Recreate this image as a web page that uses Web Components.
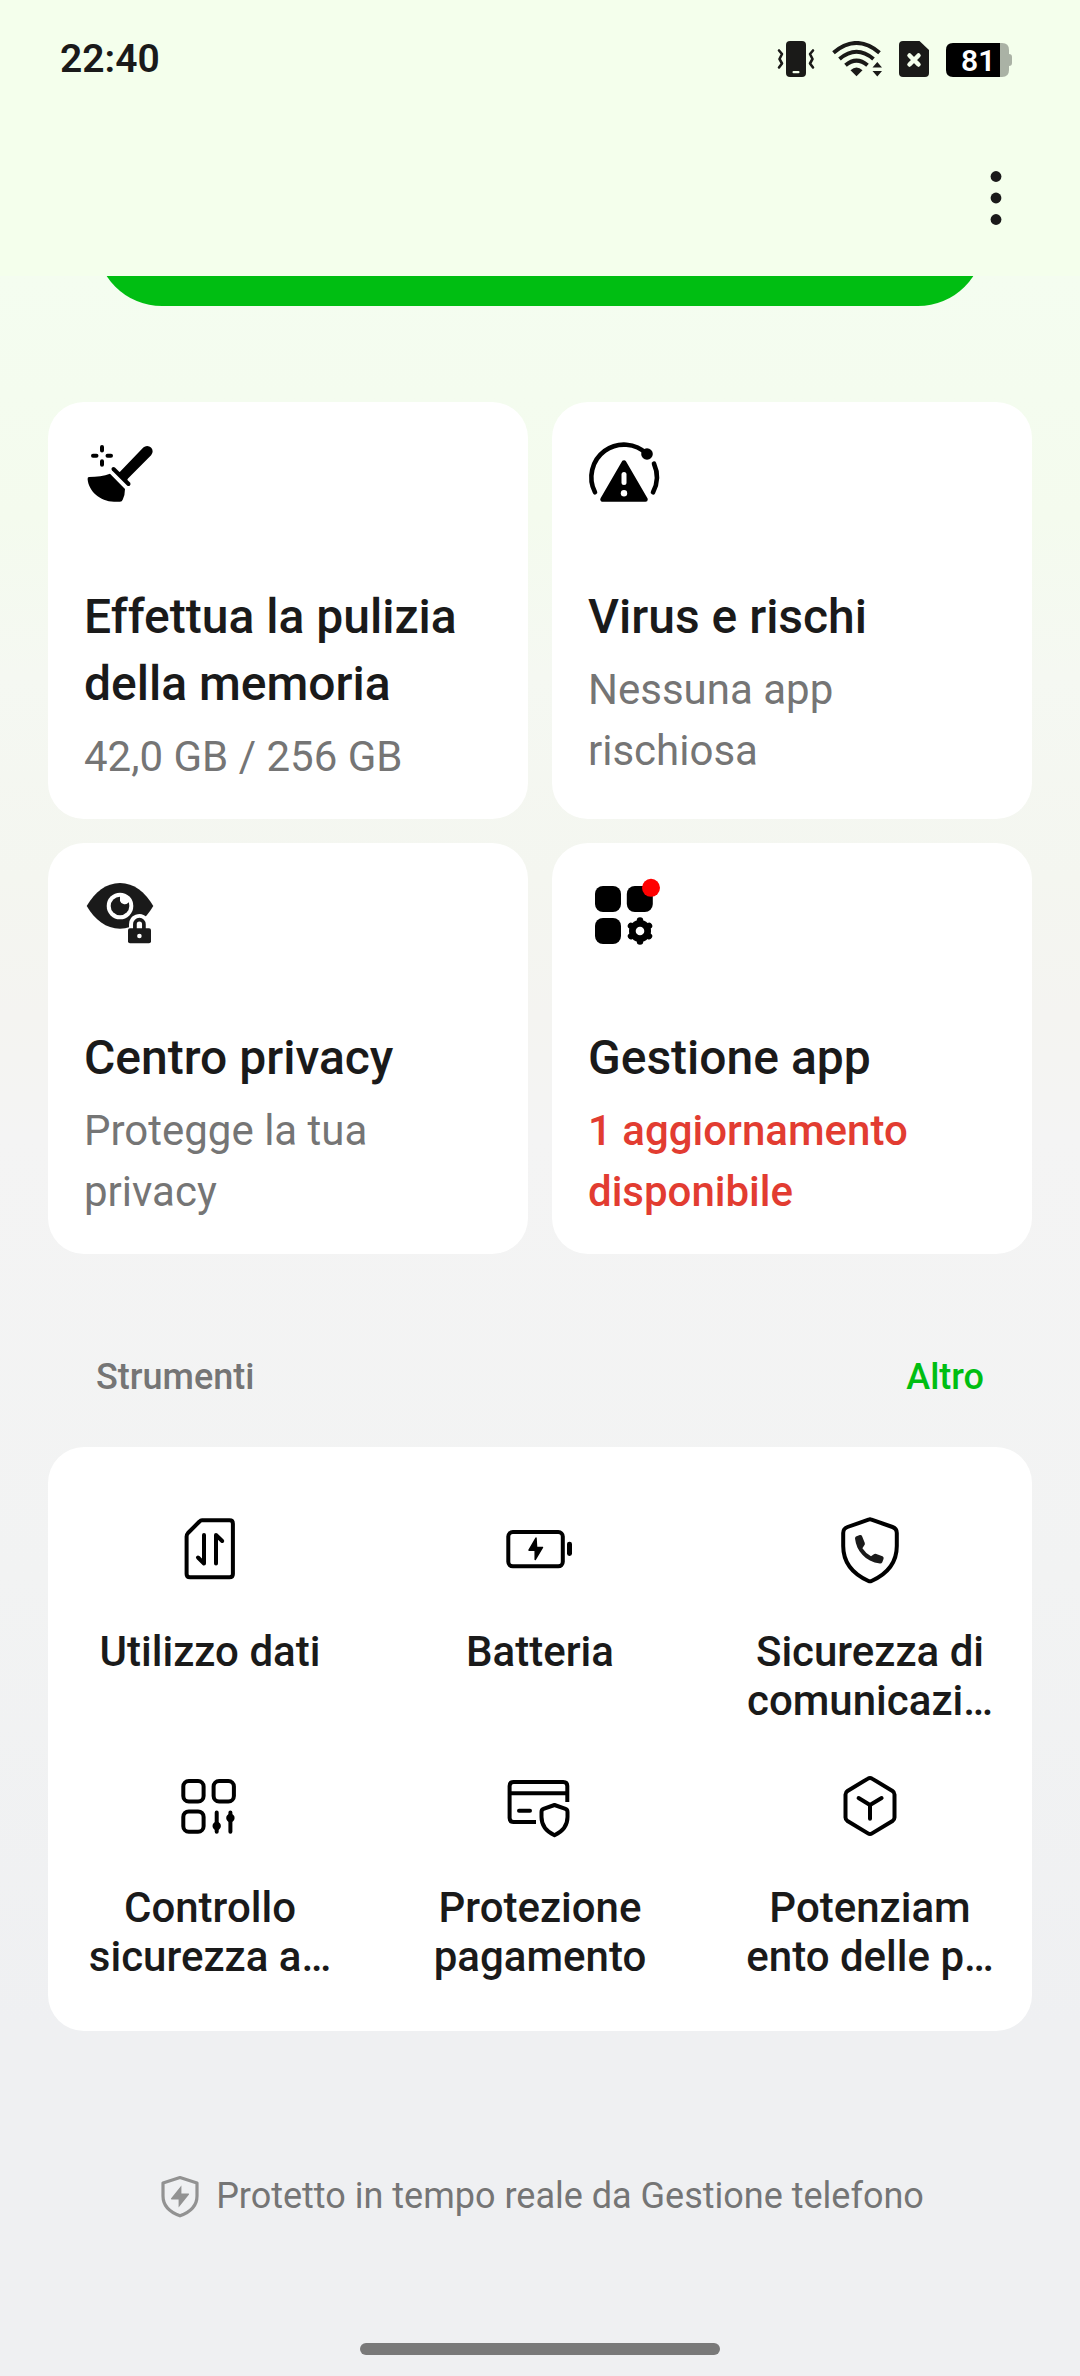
<!DOCTYPE html>
<html lang="it">
<head>
<meta charset="utf-8">
<meta name="viewport" content="width=device-width, initial-scale=1">
<title>Gestione telefono</title>
<style>
    :root {
        --ink: #1a1a1a;
        --muted: #757575;
        --accent: #00be12;
        --alert: #e23c31;
        --surface: #ffffff;
        --bar: #f4ffec;
        --radius: 36px;
        --gutter: 48px;
    }
    body {
        margin: 0;
        font-family: Roboto, "Liberation Sans", sans-serif;
        color: var(--ink);
        background: #eff0f2;
    }
</style>
</head>
<body>
<phone-manager></phone-manager>

<script>
const ICONS = {
    clean: `
        <g stroke="#000" stroke-width="4" stroke-linecap="round">
            <path d="M18 9v3.500M18 23.300v3.500M9 17.800h3.500M23.500 17.800h3.500"/>
            <path d="M29.500 31 44.500 46"/>
        </g>
        <path d="M59.300 9.600a5.400 5.400 0 0 1 7.800 7.600L44 40.500l-2 3.500-9-9 3-1.200z"/>
        <path d="M5 39Q17 39 26 35.700L41 51Q41 57 38.800 61.500 38 63.700 36 63.700H30C16 63.500 4.500 53 3.600 41Q3.500 39 5 39z"/>`,
    virus: `
        <g fill="none" stroke="#000" stroke-width="4.600" stroke-linecap="round">
            <path d="M7 54.300A32.700 32.700 0 0 1 59 16"/>
            <path d="M66 25.700A32.700 32.700 0 0 1 65 54.300"/>
        </g>
        <circle cx="59" cy="16" r="5.800"/>
        <path d="M36 24.500 14.500 61.500H57.500z" stroke="#000" stroke-width="4.500" stroke-linejoin="round"/>
        <path d="M36 36.500v8" stroke="#fff" stroke-width="5" stroke-linecap="round"/>
        <circle cx="36" cy="55.300" r="3.200" fill="#fff"/>`,
    privacy: `
        <g fill="#1a1a1a">
            <path d="M2.700 27C11 13 22 4 36 4S61 13 69.300 27C61 41 50 49.700 36 49.700S11 41 2.700 27z"/>
            <circle cx="36" cy="27" r="13.300" fill="#fff"/>
            <circle cx="36" cy="27" r="9.300"/>
            <path d="M36 16v6a5 5 0 0 0 8 2l3-5z" fill="#fff"/>
            <path d="M45 50V45.500a10.300 10.300 0 0 1 18-7L72 40V50z" fill="#fff"/>
            <rect x="44" y="49.300" width="23" height="15" rx="2"/>
            <path d="M50.900 51v-5.800a4.500 4.500 0 0 1 9 0V51" fill="none" stroke="#1a1a1a" stroke-width="3.700"/>
            <circle cx="55.400" cy="57" r="2.300" fill="#fff"/>
        </g>`,
    apps: `
        <rect x="7" y="7" width="26" height="26" rx="8"/>
        <rect x="38.800" y="7" width="26" height="26" rx="8"/>
        <rect x="7" y="39" width="26" height="26" rx="8"/>
        <circle cx="52" cy="52" r="11"/>
        <path d="M52 41.500v21M43 46.800l18 10.400M43 57.200l18-10.400" stroke="#000" stroke-width="6.500" stroke-linecap="round"/>
        <circle cx="52" cy="52" r="4.300" fill="#fff"/>
        <circle cx="63" cy="8.800" r="9" fill="#f00"/>`,
    data: `
        <g class="line">
            <path d="M28 7.300H55.500Q58.900 7.300 58.900 10.700V61Q58.900 64.300 55.500 64.300H16Q12.600 64.300 12.600 61V23.500Q12.600 21.500 14 20L25.500 8.500Q26.600 7.300 28 7.300z"/>
            <path d="M30 22v28.500l-6-6M42 50.500V22l6.200 6"/>
        </g>`,
    battery: `
        <rect class="line" x="4.300" y="19" width="54.500" height="34.300" rx="4.500"/>
        <rect x="63" y="28.700" width="5" height="14.300" rx="2.400"/>
        <path d="M32 25 25 37.200H31.200V46.500L38.500 34.400H32.600z" stroke="#000" stroke-width="1.500" stroke-linejoin="round"/>`,
    call: `
        <path class="line" d="M34.500 6.700Q36 6 37.500 6.700L58.500 14Q62.800 15.600 62.800 20V33C62.800 50 53 61 37.500 68Q36 68.700 34.500 68C19 61 9.200 50 9.200 33V20Q9.200 15.600 13.500 14z"/>
        <path fill="#1a1a1a" d="M22.500 23.200 25.800 22Q27.600 21.700 28.200 23.400L30.800 30Q31.200 31.600 30 32.800L28.400 35.200Q31.500 40 37 43.300L39.500 41.400Q40.800 40.600 42.300 41L48.500 43.200Q50 44 49.600 45.700L48.300 49.300Q47.700 50.700 46 50.600C31 48 22.500 38 21 25.400Q21 23.700 22.500 23.200z"/>`,
    control: `
        <g class="line">
            <rect x="9.300" y="12.100" width="20.300" height="20.300" rx="5.500"/>
            <rect x="39.600" y="12.100" width="20.300" height="20.300" rx="5.500"/>
            <rect x="9.300" y="42.400" width="20.300" height="20.300" rx="5.500"/>
            <path d="M42.700 43.500v19.200M56.400 43.500v19.200"/>
        </g>
        <circle cx="42.700" cy="57" r="4.200"/>
        <circle cx="56.400" cy="49" r="4.200"/>`,
    payment: `
        <g class="line">
            <path stroke-linecap="butt" d="M63.300 33V17Q63.300 13 59.300 13H9.600Q5.600 13 5.600 17V49Q5.600 53 9.600 53H32M5.600 24.300H63.300"/>
            <path d="M15 41.700h11"/>
            <path d="M50.500 36 61.500 39.800Q63.500 40.500 63.500 43V48C63.500 57 58.500 62.500 50.500 66.300 42.500 62.500 37.500 57 37.500 48V43Q37.500 40.500 39.500 39.800z"/>
        </g>`,
    boost: `
        <g class="line">
            <path d="M34 9.600Q36 8.300 38 9.600L58.500 22Q60.500 23.300 60.500 25.500V48.500Q60.500 50.700 58.500 52L38 64.400Q36 65.700 34 64.400L13.500 52Q11.500 50.700 11.500 48.500V25.500Q11.500 23.300 13.500 22z"/>
            <path d="M24.600 29 36 36 47.600 29M36 36v13.800"/>
        </g>`,
    protect: `
        <path d="M24 5.500 41 11V24C41 33.500 34.500 40 24 43.800 13.500 40 7 33.500 7 24V11z" fill="none" stroke="#929292" stroke-width="3.200" stroke-linejoin="round"/>
        <path d="M25.400 13.500 15 26.500Q14.600 27.300 15.600 27.400H22.600V35.400L33 22.400Q33.400 21.600 32.400 21.500H25.400z" fill="#929292"/>`
};

/** Builds the shadow root of an element from its styles and markup. */
function paint(el, css, html) {
    const tpl = document.createElement('template');
    tpl.innerHTML = `<style>${css}</style>${html}`;
    el.attachShadow({ mode: 'open' }).appendChild(tpl.content.cloneNode(true));
}

class PmIcon extends HTMLElement {
    connectedCallback() {
        if (this.shadowRoot) return;
        const size = this.getAttribute('size') || '72';
        paint(this, `
            :host { display: block; flex: none; }
            svg { display: block; overflow: visible; }
            .line { fill: none; stroke: #000; stroke-width: 4; stroke-linecap: round; stroke-linejoin: round; }
        `, `<svg width="${size}" height="${size}" viewBox="0 0 ${size} ${size}" aria-hidden="true">${ICONS[this.getAttribute('name')]}</svg>`);
    }
}

class StatusBar extends HTMLElement {
    connectedCallback() {
        if (this.shadowRoot) return;
        paint(this, `
            :host {
                display: flex; align-items: center; justify-content: space-between;
                height: 118px; padding: 0 68px 0 60px; box-sizing: border-box;
            }
            time { font-size: 39px; line-height: 48px; font-weight: 600; }
            .icons { display: flex; align-items: center; gap: 17px; }
            svg { display: block; }
            text { font: 600 30px Roboto, "Liberation Sans", sans-serif; }
        `, `
            <time>22:40</time>
            <div class="icons">
                <svg width="38" height="36" viewBox="0 0 38 36" fill="#1a1a18">
                    <rect x="9" width="20" height="36" rx="4"/>
                    <rect x="15.500" y="30" width="7" height="2.200" rx="1" fill="#f4ffec"/>
                    <path d="M2 9.500 5 13 2.500 18 5 22.500 2 26.500M36 9.500 33 13 35.500 18 33 22.500 36 26.500" fill="none" stroke="#1a1a18" stroke-width="2.600" stroke-linecap="round" stroke-linejoin="round"/>
                </svg>
                <svg width="50" height="36" viewBox="0 0 50 36" fill="#1a1a18">
                    <g fill="none" stroke="#1a1a18" stroke-width="4">
                        <path d="M1.500 11.700Q24.500 -7.700 47.500 11.700"/>
                        <path d="M7.500 18Q24.500 3.500 41.500 18"/>
                        <path d="M13.500 24.200Q24.500 15 35.500 24.200"/>
                    </g>
                    <path d="M18.500 29.200Q24.500 24 30.500 29.200L24.500 35.200z"/>
                    <path d="M45.300 21 50 26.500H40.500zM40.500 30H50L45.300 35.500z"/>
                </svg>
                <svg width="30" height="36" viewBox="0 0 30 36">
                    <path d="M4 0H20.500L30 9V32Q30 36 26 36H4Q0 36 0 32V4Q0 0 4 0z" fill="#1a1a18"/>
                    <path d="M10.500 14.500 19.500 23.500M19.500 14.500 10.500 23.500" stroke="#f4ffec" stroke-width="4.500" stroke-linecap="round"/>
                </svg>
                <svg width="66" height="36" viewBox="0 0 66 36" role="img" aria-label="Batteria">
                    <path d="M54 2H56Q63 2 63 9V13Q66 13 66 16V22Q66 25 63 25V29Q63 36 56 36H54z" fill="#aab2a5"/>
                    <path d="M7 2H54V36H7Q0 36 0 29V9Q0 2 7 2z"/>
                    <text x="15" y="30" fill="#fff">81</text>
                </svg>
            </div>
        `);
    }
}

class TopBar extends HTMLElement {
    connectedCallback() {
        if (this.shadowRoot) return;
        paint(this, `
            :host {
                display: flex; align-items: center; justify-content: flex-end;
                height: 158px; padding: 0 48px; box-sizing: border-box;
            }
            button { width: 72px; height: 72px; padding: 0; border: 0; background: none; color: var(--ink); cursor: pointer; }
            svg { display: block; }
        `, `
            <button type="button" aria-label="Altre opzioni">
                <svg width="72" height="72" viewBox="0 0 72 72" fill="currentColor">
                    <circle cx="36" cy="15.500" r="5.400"/><circle cx="36" cy="37" r="5.400"/><circle cx="36" cy="58.500" r="5.400"/>
                </svg>
            </button>
        `);
    }
}

class FeatureCard extends HTMLElement {
    connectedCallback() {
        if (this.shadowRoot) return;
        paint(this, `
            :host { display: flex; }
            a {
                flex: 1; padding: 36px 36px 32px; box-sizing: border-box;
                border-radius: var(--radius); background: var(--surface);
                color: inherit; text-decoration: none;
            }
            h2 { margin: 73px 0 9px; font-size: 48px; line-height: 67px; font-weight: 500; }
            p { margin: 0; font-size: 42px; line-height: 61px; color: var(--muted); }
            :host([alert]) p { color: var(--alert); font-weight: 500; }
        `, `
            <a href="#">
                <pm-icon name="${this.getAttribute('icon')}"></pm-icon>
                <h2><slot name="title"></slot></h2>
                <p><slot></slot></p>
            </a>
        `);
    }
}

class ToolItem extends HTMLElement {
    connectedCallback() {
        if (this.shadowRoot) return;
        paint(this, `
            :host { display: block; min-width: 0; }
            a {
                display: flex; flex-direction: column; align-items: center; gap: 42px;
                color: inherit; text-decoration: none;
            }
            span { min-height: 98px; font-size: 42px; line-height: 49px; font-weight: 500; text-align: center; }
        `, `
            <a href="#">
                <pm-icon name="${this.getAttribute('icon')}"></pm-icon>
                <span><slot></slot></span>
            </a>
        `);
    }
}

class ToolPanel extends HTMLElement {
    connectedCallback() {
        if (this.shadowRoot) return;
        paint(this, `
            :host { display: block; }
            header {
                display: flex; justify-content: space-between; align-items: center;
                padding: 0 48px; margin-bottom: 48px;
                font-size: 36px; line-height: 43px; font-weight: 500;
            }
            h2 { margin: 0; font: inherit; color: var(--muted); }
            a { color: var(--accent); text-decoration: none; }
            .grid {
                display: grid; grid-template-columns: repeat(3, minmax(0, 1fr)); gap: 44px 78px;
                padding: 66px 36px 50px; border-radius: var(--radius); background: var(--surface);
            }
        `, `
            <header><h2><slot name="title"></slot></h2><a href="#">Altro</a></header>
            <div class="grid"><slot></slot></div>
        `);
    }
}

class PhoneManager extends HTMLElement {
    connectedCallback() {
        if (this.shadowRoot) return;
        paint(this, `
            :host { display: flex; flex-direction: column; min-height: 100vh; }
            .top { background: var(--bar); }
            main {
                flex: 1; display: flex; flex-direction: column; padding: 0 var(--gutter) 21px;
                background: linear-gradient(#f4fdf0, #f4fbee 240px, #f5f8f2 400px, #f4f6f0 600px, #f4f4f1 740px, #f4f4f4 860px, #f2f3f3 1300px, #eff0f2 1750px);
            }
            /* the main action, scrolled almost out of view */
            .peek { display: flex; align-items: flex-end; height: 30px; padding: 0 48px; overflow: hidden; }
            .peek button { flex: 1; height: 132px; border: 0; border-radius: 66px; background: var(--accent); }
            .cards { display: grid; grid-template-columns: repeat(2, minmax(0, 1fr)); gap: 24px; margin: 96px 0 102px; }
            footer {
                display: flex; align-items: center; justify-content: center; gap: 12px;
                margin: 141px 0 96px; font-size: 36px; line-height: 48px; color: var(--muted);
            }
            .home { width: 360px; height: 12px; margin: auto auto 0; border-radius: 6px; background: #797979; }
        `, `
            <div class="top">
                <status-bar></status-bar>
                <top-bar></top-bar>
            </div>
            <main>
                <div class="peek"><button type="button" aria-label="Ottimizza"></button></div>
                <section class="cards">
                    <feature-card icon="clean"><span slot="title">Effettua la pulizia della memoria</span>42,0 GB / 256 GB</feature-card>
                    <feature-card icon="virus"><span slot="title">Virus e rischi</span>Nessuna app<br>rischiosa</feature-card>
                    <feature-card icon="privacy"><span slot="title">Centro privacy</span>Protegge la tua<br>privacy</feature-card>
                    <feature-card icon="apps" alert><span slot="title">Gestione app</span>1 aggiornamento<br>disponibile</feature-card>
                </section>
                <tool-panel>
                    <span slot="title">Strumenti</span>
                    <tool-item icon="data">Utilizzo dati</tool-item>
                    <tool-item icon="battery">Batteria</tool-item>
                    <tool-item icon="call">Sicurezza di comunicazi…</tool-item>
                    <tool-item icon="control">Controllo sicurezza a…</tool-item>
                    <tool-item icon="payment">Protezione pagamento</tool-item>
                    <tool-item icon="boost">Potenziam<br>ento delle p…</tool-item>
                </tool-panel>
                <footer><pm-icon name="protect" size="48"></pm-icon><span>Protetto in tempo reale da Gestione telefono</span></footer>
                <div class="home"></div>
            </main>
        `);
    }
}

customElements.define('pm-icon', PmIcon);
customElements.define('status-bar', StatusBar);
customElements.define('top-bar', TopBar);
customElements.define('feature-card', FeatureCard);
customElements.define('tool-item', ToolItem);
customElements.define('tool-panel', ToolPanel);
customElements.define('phone-manager', PhoneManager);
</script>
</body>
</html>
